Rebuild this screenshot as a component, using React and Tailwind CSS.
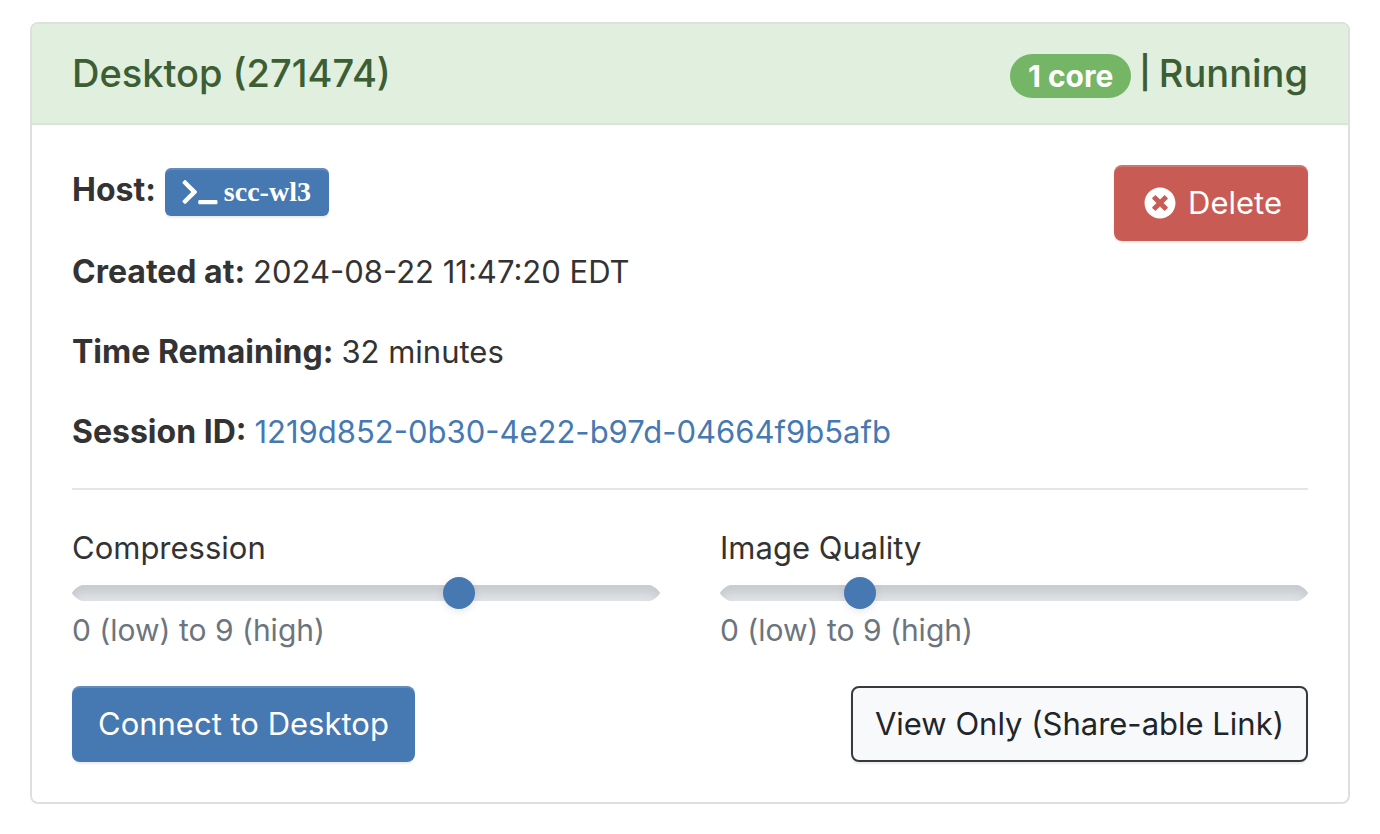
import { useState } from "react";
import { FaTerminal, FaTimesCircle } from "react-icons/fa";

const buttonShadow =
  "shadow-[inset_0_2px_0_rgba(255,255,255,0.15),0_2px_2px_rgba(0,0,0,0.075)]";

function Detail({ label, children }) {
  return (
    <p className="flex flex-wrap gap-x-[8px]">
      <strong className="text-[32px] font-bold">{label}</strong>
      {children}
    </p>
  );
}

function RangeField({ id, label, initial }) {
  const [value, setValue] = useState(initial);
  return (
    <div className="flex min-w-0 flex-1 flex-col">
      <label htmlFor={id}>{label}</label>
      <input
        id={id}
        type="range"
        min="0"
        max="9"
        value={value}
        onChange={(e) => setValue(Number(e.target.value))}
        aria-describedby={id + "-help"}
        className="h-[42px] w-full appearance-none bg-transparent [&::-webkit-slider-runnable-track]:h-[16px] [&::-webkit-slider-runnable-track]:rounded-[10px/8px] [&::-webkit-slider-runnable-track]:[corner-shape:superellipse(0.4)] [&::-webkit-slider-runnable-track]:bg-[#dee2e6] [&::-webkit-slider-runnable-track]:shadow-[inset_0_8px_8px_rgba(0,0,0,0.1)] [&::-webkit-slider-thumb]:-mt-[8px] [&::-webkit-slider-thumb]:h-[32px] [&::-webkit-slider-thumb]:w-[32px] [&::-webkit-slider-thumb]:appearance-none [&::-webkit-slider-thumb]:rounded-full [&::-webkit-slider-thumb]:bg-[#4678b2] [&::-webkit-slider-thumb]:shadow-[0_2px_8px_rgba(0,0,0,0.1)]"
      />
      <small id={id + "-help"} className="text-[30px] leading-[32px] text-[#6c757d]">
        0 (low) to 9 (high)
      </small>
    </div>
  );
}

export default function App() {
  return (
    <main className="px-[30px] py-[22px] font-[Inter,sans-serif] text-[31px] leading-[48px] text-[#333333]">
      <section className="overflow-hidden rounded-[8px] border-2 border-[#dfdfdf] bg-white">
        <header className="flex items-center justify-between border-b-2 border-[#d5e9d1] bg-[#e1efde] px-[40px] pt-[24px] pb-[25px] text-[38px] leading-[48px] font-medium text-[#3c5e35]">
          <h2>Desktop (271474)</h2>
          <div className="flex items-center gap-[8px]">
            <span className="mt-[6px] rounded-full bg-[#74b566] px-[18px] py-[6px] text-[30px] leading-[32px] font-bold text-white">
              1 core
            </span>
            <span className="text-[32px] font-semibold">|</span>
            <span>Running</span>
          </div>
        </header>

        <div className="p-[40px]">
          <div className="flex items-start justify-between">
            <div className="flex flex-col gap-[32px] pt-[1px]">
              <div className="flex items-start gap-[9px]">
                <strong className="text-[32px] font-bold">Host:</strong>
                <a
                  href="#host"
                  className={`mt-[2px] flex h-[48px] items-center gap-[6px] rounded-[6px] bg-[#4678b2] px-[18px] pl-[17px] font-['Liberation_Serif',serif] text-[28px] font-bold text-white ${buttonShadow}`}
                >
                  <FaTerminal className="h-[28px] w-[36px]" aria-hidden="true" />
                  scc-wl3
                </a>
              </div>
              <Detail label="Created at:">2024-08-22 11:47:20 EDT</Detail>
              <Detail label="Time Remaining:">32 minutes</Detail>
              <Detail label="Session ID:">
                <a href="#session" className="text-[#4678b2]">
                  1219d852-0b30-4e22-b97d-04664f9b5afb
                </a>
              </Detail>
            </div>
            <button
              type="button"
              className={`flex h-[76px] items-center gap-[12px] rounded-[8px] bg-[#c85c54] px-[26px] pl-[30px] text-white ${buttonShadow}`}
            >
              <FaTimesCircle className="h-[32px] w-[32px]" aria-hidden="true" />
              Delete
            </button>
          </div>

          <hr className="my-[32px] border-t-2 border-[#e5e5e5]" />

          <div className="flex gap-[60px] pt-[2px]">
            <RangeField id="compression" label="Compression" initial={6} />
            <RangeField id="quality" label="Image Quality" initial={2} />
          </div>

          <div className="mt-[40px] flex items-center justify-between">
            <button
              type="button"
              className={`h-[76px] rounded-[8px] bg-[#4678b2] px-[26px] text-white ${buttonShadow}`}
            >
              Connect to Desktop
            </button>
            <a
              href="#view-only"
              className="flex h-[76px] items-center rounded-[8px] border-2 border-[#343a40] bg-[#f8f9fa] px-[22px] text-[#212529] shadow-[0_2px_2px_rgba(0,0,0,0.075)]"
            >
              View Only (Share-able Link)
            </a>
          </div>
        </div>
      </section>
    </main>
  );
}
